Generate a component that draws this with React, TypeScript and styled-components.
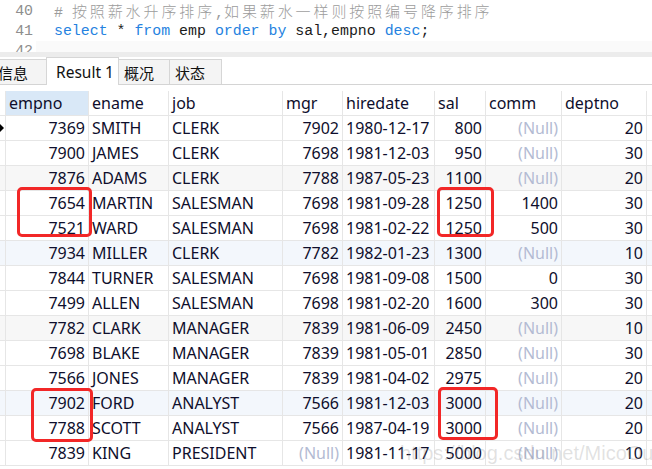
import React from 'react';
import styled, { createGlobalStyle, css } from 'styled-components';

const GlobalStyle = createGlobalStyle`
    html, body {
        margin: 0;
        padding: 0;
        background: #ffffff;
        overflow: hidden;
    }
`;

type Align = 'left' | 'right';

interface Column {
    key: string;
    width: number;
    align: Align;
}

const columns: Column[] = [
    { key: 'empno', width: 83, align: 'right' },
    { key: 'ename', width: 80, align: 'left' },
    { key: 'job', width: 114, align: 'left' },
    { key: 'mgr', width: 60, align: 'right' },
    { key: 'hiredate', width: 92, align: 'left' },
    { key: 'sal', width: 51, align: 'right' },
    { key: 'comm', width: 76, align: 'right' },
    { key: 'deptno', width: 85, align: 'right' },
];

const NULL = null;

const rows: (string | null)[][] = [
    ['7369', 'SMITH', 'CLERK', '7902', '1980-12-17', '800', NULL, '20'],
    ['7900', 'JAMES', 'CLERK', '7698', '1981-12-03', '950', NULL, '30'],
    ['7876', 'ADAMS', 'CLERK', '7788', '1987-05-23', '1100', NULL, '20'],
    ['7654', 'MARTIN', 'SALESMAN', '7698', '1981-09-28', '1250', '1400', '30'],
    ['7521', 'WARD', 'SALESMAN', '7698', '1981-02-22', '1250', '500', '30'],
    ['7934', 'MILLER', 'CLERK', '7782', '1982-01-23', '1300', NULL, '10'],
    ['7844', 'TURNER', 'SALESMAN', '7698', '1981-09-08', '1500', '0', '30'],
    ['7499', 'ALLEN', 'SALESMAN', '7698', '1981-02-20', '1600', '300', '30'],
    ['7782', 'CLARK', 'MANAGER', '7839', '1981-06-09', '2450', NULL, '10'],
    ['7698', 'BLAKE', 'MANAGER', '7839', '1981-05-01', '2850', NULL, '30'],
    ['7566', 'JONES', 'MANAGER', '7839', '1981-04-02', '2975', NULL, '20'],
    ['7902', 'FORD', 'ANALYST', '7566', '1981-12-03', '3000', NULL, '20'],
    ['7788', 'SCOTT', 'ANALYST', '7566', '1987-04-19', '3000', NULL, '20'],
    ['7839', 'KING', 'PRESIDENT', NULL, '1981-11-17', '5000', NULL, '10'],
];

// row tint as it appears in the shot (gray / bluish every third row)
const tintFor = (i: number): 'none' | 'gray' | 'blue' => {
    if (i === 2 || i === 8) return 'gray';
    if (i === 5 || i === 11) return 'blue';
    return 'none';
};

const highlights = [
    { left: 17, top: 187, width: 75, height: 50 },
    { left: 437, top: 187, width: 57, height: 50 },
    { left: 31, top: 388, width: 62, height: 54 },
    { left: 438, top: 387, width: 60, height: 53 },
];

const tabs = [
    { label: '信息', width: 55, offset: -8 },
    { label: 'Result 1', width: 73, active: true },
    { label: '概况', width: 52 },
    { label: '状态', width: 53 },
];

export default function App() {
    return (
        <Page>
            <GlobalStyle />
            <Editor>
                <Gutter>
                    <LineNo>40</LineNo>
                    <LineNo>41</LineNo>
                    <LineNo>42</LineNo>
                </Gutter>
                <Code>
                    <CodeLine>
                        <Comment>
                            # <Wide>按照薪水升序排序</Wide>,<Wide>如果薪水一样则按照编号降序排序</Wide>
                        </Comment>
                    </CodeLine>
                    <CodeLine>
                        <Kw>select</Kw> * <Kw>from</Kw> emp <Kw>order</Kw> <Kw>by</Kw> sal,empno{' '}
                        <Kw>desc</Kw>;
                    </CodeLine>
                    <CodeLine current />
                </Code>
            </Editor>
            <Splitter />
            <TabBar>
                {tabs.map((t) => (
                    <Tab key={t.label} active={!!t.active} w={t.width} offset={t.offset ?? 0}>
                        {t.label}
                    </Tab>
                ))}
            </TabBar>
            <Grid>
                <HeaderRow>
                    <RowMark />
                    {columns.map((c, i) => (
                        <HeadCell key={c.key} w={c.width} selected={i === 0}>
                            {c.key}
                        </HeadCell>
                    ))}
                </HeaderRow>
                {rows.map((r, ri) => (
                    <DataRow key={ri} tint={tintFor(ri)}>
                        <RowMark>{ri === 0 && <Pointer />}</RowMark>
                        {r.map((v, ci) => (
                            <Cell key={ci} w={columns[ci].width} align={columns[ci].align} isNull={v === null}>
                                {v === null ? '(Null)' : v}
                            </Cell>
                        ))}
                    </DataRow>
                ))}
            </Grid>
            {highlights.map((h, i) => (
                <Mark key={i} style={{ left: h.left, top: h.top, width: h.width, height: h.height }} />
            ))}
            <Watermark>https://blog.csdn.net/MicoOu</Watermark>
        </Page>
    );
}

const Page = styled.div`
    position: relative;
    width: 652px;
    height: 469px;
    overflow: hidden;
    background: #fff;
`;

const Editor = styled.div`
    display: flex;
    height: 52px;
    overflow: hidden;
    padding-top: 1px;
    box-sizing: border-box;
    font-family: 'Liberation Mono', 'Noto Sans CJK SC', monospace;
    font-size: 14.9px;
`;

const Gutter = styled.div`
    width: 36px;
    flex-shrink: 0;
    padding-right: 3px;
    box-sizing: border-box;
    text-align: right;
    color: #8e8e8e;
`;

const LineNo = styled.div`
    height: 20px;
    line-height: 20px;
`;

const Code = styled.div`
    flex: 1;
    padding-left: 18px;
    color: #1b1b1b;
`;

const CodeLine = styled.div<{ current?: boolean }>`
    height: 20px;
    line-height: 20px;
    white-space: pre;
    ${({ current }) =>
        current &&
        css`
            margin-left: -18px;
            background: #fafafa;
        `}
`;

const Comment = styled.span`
    color: #9c9c9c;
`;

const Wide = styled.span`
    font-family: 'Noto Sans CJK SC', sans-serif;
    font-size: 15px;
    letter-spacing: 2.9px;
    font-weight: 300;
`;

const Kw = styled.span`
    color: #2582e0;
`;

const Splitter = styled.div`
    height: 5px;
    background: #ececec;
`;

const TabBar = styled.div`
    display: flex;
    align-items: flex-end;
    height: 28px;
    border-bottom: 1px solid #d4d4d4;
    box-sizing: border-box;
    font-family: 'Noto Sans', 'Noto Sans CJK SC', sans-serif;
    font-size: 15px;
    color: #111;
`;

const Tab = styled.div<{ active: boolean; w: number; offset: number }>`
    width: ${({ w }) => w}px;
    margin-left: ${({ offset }) => offset}px;
    flex-shrink: 0;
    box-sizing: border-box;
    border: 1px solid #d6d6d6;
    border-bottom: none;
    margin-right: -1px;
    display: flex;
    align-items: center;
    ${({ active }) =>
        active
            ? css`
                  height: 28px;
                  margin-bottom: -1px;
                  background: #ffffff;
                  padding-left: 9px;
                  font-size: 15.5px;
                  position: relative;
                  z-index: 1;
              `
            : css`
                  height: 25px;
                  background: #f4f4f4;
                  padding-left: 5px;
              `}
`;

const Grid = styled.div`
    margin-top: 6px;
    font-family: 'Noto Sans', sans-serif;
    font-size: 16px;
    color: #0e0e2c;
`;

const rowBase = css`
    display: flex;
    height: 25px;
    box-sizing: border-box;
    border-bottom: 1px solid #e6e6e6;
`;

const HeaderRow = styled.div`
    ${rowBase}
`;

const DataRow = styled.div<{ tint: 'none' | 'gray' | 'blue' }>`
    ${rowBase}
    background: ${({ tint }) => (tint === 'gray' ? '#f7f7f7' : tint === 'blue' ? '#f3f7fc' : '#ffffff')};
`;

const RowMark = styled.div`
    width: 6px;
    flex-shrink: 0;
    border-right: 1px solid #e6e6e6;
    box-sizing: border-box;
    display: flex;
    align-items: center;
`;

const Pointer = styled.span`
    width: 0;
    height: 0;
    border-left: 4px solid #000;
    border-top: 4px solid transparent;
    border-bottom: 4px solid transparent;
`;

const HeadCell = styled.div<{ w: number; selected: boolean }>`
    width: ${({ w }) => w}px;
    flex-shrink: 0;
    box-sizing: border-box;
    border-right: 1px solid #e6e6e6;
    padding: 0 3px;
    line-height: 24px;
    white-space: nowrap;
    background: ${({ selected }) => (selected ? '#d9e8f7' : 'transparent')};
`;

const Cell = styled.div<{ w: number; align: Align; isNull: boolean }>`
    width: ${({ w }) => w}px;
    flex-shrink: 0;
    box-sizing: border-box;
    border-right: 1px solid #e6e6e6;
    padding: 0 3px;
    line-height: 24px;
    white-space: nowrap;
    overflow: hidden;
    text-align: ${({ align }) => align};
    color: ${({ isNull }) => (isNull ? '#b3bbd3' : 'inherit')};
`;

const Mark = styled.div`
    position: absolute;
    box-sizing: border-box;
    border: 3px solid #f22727;
    border-radius: 5px;
    pointer-events: none;
`;

const Watermark = styled.div`
    position: absolute;
    left: 400px;
    top: 440px;
    font-family: 'Liberation Sans', sans-serif;
    font-size: 20px;
    line-height: 26px;
    color: rgba(150, 150, 150, 0.28);
    white-space: nowrap;
    pointer-events: none;
`;
